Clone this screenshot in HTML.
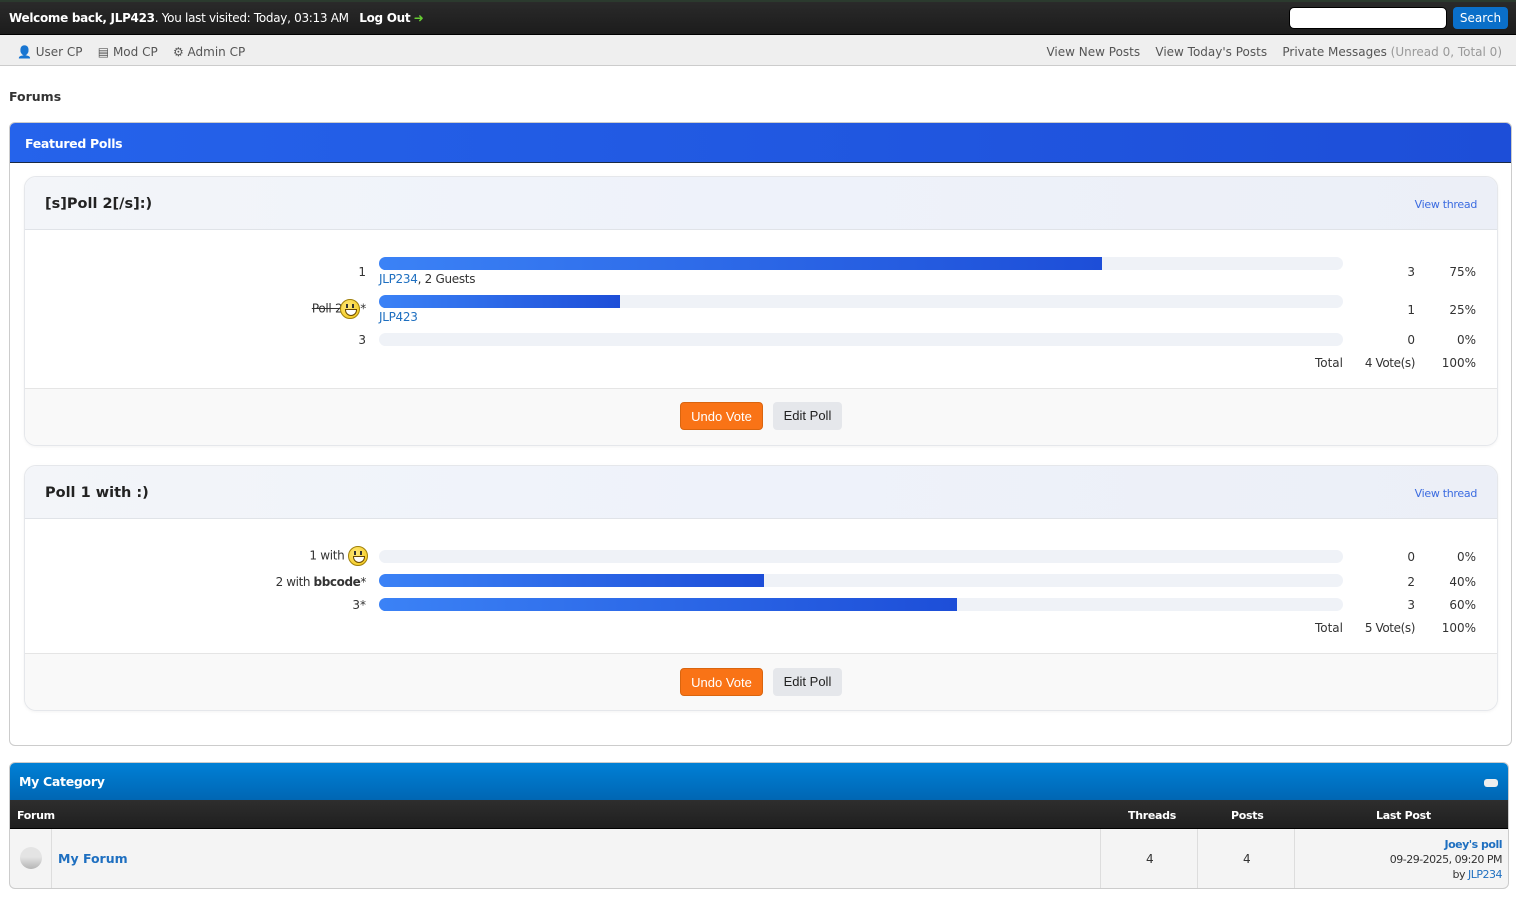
<!DOCTYPE html>
<html><head><meta charset="utf-8"><style>
*{box-sizing:border-box;margin:0;padding:0}
body{width:1516px;height:901px;background:#fff;font-family:"DejaVu Sans","Liberation Sans",sans-serif;font-size:12px;color:#333;position:relative;overflow:hidden}
.a{position:absolute;white-space:nowrap}
.top{left:0;top:0;width:1516px;height:35px;background:linear-gradient(#2a2a2a,#1c1c1c);border-top:2px solid #2b3a2e;border-bottom:1px solid #000}
.nav{left:0;top:35px;width:1516px;height:31px;background:#efefef;border-bottom:1px solid #ccc}
.navt{color:#555;font-size:12px;top:45px}
.box{border:1px solid #ccc;border-radius:6px;background:#fff}
.card{border:1px solid #e5e7eb;border-radius:12px;background:#fff;overflow:hidden;box-shadow:0 1px 3px rgba(0,0,0,.05)}
.ch{position:absolute;left:0;top:0;right:0;height:53px;background:linear-gradient(90deg,#f3f5f9,#eef2fa,#eceff7);border-bottom:1px solid #e0e3e8}
.cf{position:absolute;left:0;right:0;bottom:0;height:57px;background:#f9f9f9;border-top:1px solid #e5e5e5}
.tr{position:absolute;left:379px;width:964px;height:13px;background:#eff2f7;border-radius:7px}
.fl{position:absolute;left:379px;height:13px;background:linear-gradient(90deg,#3b82f6,#1d4ed8);border-radius:7px 0 0 7px}
.r{text-align:right}
.lk{color:#1e6fc0}
.btn{position:absolute;height:28px;border-radius:4px;font-family:"Liberation Sans",sans-serif;font-size:13px;line-height:28px;text-align:center}
.smile{display:inline-block;width:20px;height:20px;border-radius:50%;background:radial-gradient(circle at 40% 35%,#ffe97a,#f2c40f);border:1px solid #a0800a;vertical-align:middle;position:relative}
.smile:after{content:"";position:absolute;left:4px;top:9px;width:10px;height:5px;border-radius:0 0 6px 6px;background:#fff;border:1px solid #6b4a00}
.smile:before{content:"";position:absolute;left:5px;top:4px;width:2px;height:4px;background:#333;box-shadow:6px 0 0 #333}
</style></head><body>
<div class="a top"></div>
<div class="a" style="left:9px;top:11px;color:#fff;font-size:12px;letter-spacing:-.3px"><b>Welcome back, JLP423</b>. You last visited: Today, 03:13 AM &nbsp;&nbsp;<b>Log Out</b> <span style="color:#6c3">➜</span></div>
<div class="a" style="left:1289px;top:7px;width:158px;height:22px;background:#fff;border-radius:5px;border:1px solid #000"></div>
<div class="a" style="left:1453px;top:7px;width:55px;height:22px;background:#0a6fc9;border-radius:4px;color:#fff;font-size:12px;line-height:22px;text-align:center">Search</div>
<div class="a nav"></div>
<div class="a navt" style="left:17px">👤 User CP &nbsp;&nbsp;&nbsp;▤ Mod CP &nbsp;&nbsp;&nbsp;⚙ Admin CP</div>
<div class="a navt" style="right:14px">View New Posts &nbsp;&nbsp;&nbsp;View Today's Posts &nbsp;&nbsp;&nbsp;Private Messages <span style="color:#999">(Unread 0, Total 0)</span></div>
<div class="a" style="left:9px;top:89px;font-weight:bold;font-size:12.5px">Forums</div>

<div class="a box" style="left:9px;top:122px;width:1503px;height:624px"></div>
<div class="a" style="left:10px;top:123px;width:1501px;height:40px;background:linear-gradient(90deg,#2563eb,#1d4ed8);border-bottom:1px solid #1a2a44;border-radius:5px 5px 0 0"></div>
<div class="a" style="left:25px;top:136px;color:#fff;font-weight:bold;font-size:12.5px;letter-spacing:-.3px">Featured Polls</div>

<div class="a card" style="left:24px;top:176px;width:1474px;height:270px">
<div class="ch"></div><div class="cf"></div>
<div class="a" style="left:20px;top:19px;font-weight:bold;font-size:14.5px;color:#222">[s]Poll 2[/s]:)</div>
<div class="a" style="right:20px;top:21px;font-size:11px;color:#3b6be0;letter-spacing:-.3px">View thread</div>
</div>
<div class="tr" style="top:257px"></div><div class="fl" style="top:257px;width:723px"></div>
<div class="tr" style="top:295px"></div><div class="fl" style="top:295px;width:241px"></div>
<div class="tr" style="top:333px"></div>
<div class="a r" style="right:1150px;top:265px">1</div>
<div class="a" style="left:379px;top:272px;letter-spacing:-.3px"><span class="lk">JLP234</span>, 2 Guests</div>
<div class="a r" style="right:1150px;top:299px;letter-spacing:-.3px"><s>Poll 2</s><span class="smile" style="margin-left:-2px"></span>*</div>
<div class="a lk" style="left:379px;top:310px;letter-spacing:-.3px">JLP423</div>
<div class="a r" style="right:1150px;top:333px">3</div>
<div class="a r" style="right:101px;top:265px">3</div><div class="a r" style="right:40px;top:265px">75%</div>
<div class="a r" style="right:101px;top:303px">1</div><div class="a r" style="right:40px;top:303px">25%</div>
<div class="a r" style="right:101px;top:333px">0</div><div class="a r" style="right:40px;top:333px">0%</div>
<div class="a r" style="right:173px;top:356px">Total</div><div class="a r" style="right:101px;top:356px;letter-spacing:-.4px">4 Vote(s)</div><div class="a r" style="right:40px;top:356px">100%</div>
<div class="btn" style="left:680px;top:402px;width:83px;background:#f97316;color:#fff;border:1px solid #d9650f">Undo Vote</div>
<div class="btn" style="left:773px;top:402px;width:69px;background:#e5e7eb;color:#222">Edit Poll</div>

<div class="a card" style="left:24px;top:465px;width:1474px;height:246px">
<div class="ch"></div><div class="cf"></div>
<div class="a" style="left:20px;top:19px;font-weight:bold;font-size:14.5px;color:#222">Poll 1 with :)</div>
<div class="a" style="right:20px;top:21px;font-size:11px;color:#3b6be0;letter-spacing:-.3px">View thread</div>
</div>
<div class="tr" style="top:550px"></div>
<div class="tr" style="top:574px"></div><div class="fl" style="top:574px;width:385px"></div>
<div class="tr" style="top:598px"></div><div class="fl" style="top:598px;width:578px"></div>
<div class="a r" style="right:1148px;top:546px;letter-spacing:-.3px">1 with <span class="smile"></span></div>
<div class="a r" style="right:1150px;top:575px;letter-spacing:-.4px">2 with <b>bbcode</b>*</div>
<div class="a r" style="right:1150px;top:598px">3*</div>
<div class="a r" style="right:101px;top:550px">0</div><div class="a r" style="right:40px;top:550px">0%</div>
<div class="a r" style="right:101px;top:575px">2</div><div class="a r" style="right:40px;top:575px">40%</div>
<div class="a r" style="right:101px;top:598px">3</div><div class="a r" style="right:40px;top:598px">60%</div>
<div class="a r" style="right:173px;top:621px">Total</div><div class="a r" style="right:101px;top:621px;letter-spacing:-.4px">5 Vote(s)</div><div class="a r" style="right:40px;top:621px">100%</div>
<div class="btn" style="left:680px;top:668px;width:83px;background:#f97316;color:#fff;border:1px solid #d9650f">Undo Vote</div>
<div class="btn" style="left:773px;top:668px;width:69px;background:#e5e7eb;color:#222">Edit Poll</div>

<div class="a box" style="left:9px;top:762px;width:1500px;height:127px;background:#f4f4f4"></div>
<div class="a" style="left:10px;top:763px;width:1498px;height:37px;background:linear-gradient(#0080d6,#0066b3);border-radius:5px 5px 0 0"></div>
<div class="a" style="left:19px;top:774px;color:#fff;font-weight:bold;font-size:12.5px;letter-spacing:-.3px">My Category</div>
<div class="a" style="left:1484px;top:779px;width:14px;height:8px;background:#eee;border-radius:3px"></div>
<div class="a" style="left:10px;top:800px;width:1498px;height:29px;background:linear-gradient(#2e2e2e,#1f1f1f);border-bottom:1px solid #000"></div>
<div class="a" style="left:17px;top:809px;color:#fff;font-weight:bold;font-size:11px;letter-spacing:-.3px">Forum</div>
<div class="a" style="left:1128px;top:809px;color:#fff;font-weight:bold;font-size:11px;letter-spacing:-.3px">Threads</div>
<div class="a" style="left:1231px;top:809px;color:#fff;font-weight:bold;font-size:11px;letter-spacing:-.3px">Posts</div>
<div class="a" style="left:1376px;top:809px;color:#fff;font-weight:bold;font-size:11px;letter-spacing:-.3px">Last Post</div>
<div class="a" style="left:51px;top:829px;width:1px;height:59px;background:#ddd"></div>
<div class="a" style="left:1100px;top:829px;width:1px;height:59px;background:#ddd"></div>
<div class="a" style="left:1197px;top:829px;width:1px;height:59px;background:#ddd"></div>
<div class="a" style="left:1294px;top:829px;width:1px;height:59px;background:#ddd"></div>
<div class="a" style="left:20px;top:847px;width:22px;height:22px;border-radius:50%;background:linear-gradient(#e4e4e4 45%,#b5b5b5)"></div>
<div class="a" style="left:58px;top:851px;color:#1e6fc0;font-weight:bold;font-size:12.5px">My Forum</div>
<div class="a" style="left:1146px;top:852px">4</div>
<div class="a" style="left:1243px;top:852px">4</div>
<div class="a r" style="right:14px;top:837px;font-size:11px;line-height:15px;letter-spacing:-.5px"><b class="lk">Joey's poll</b><br>09-29-2025, 09:20 PM<br>by <span class="lk">JLP234</span></div>
</body></html>
